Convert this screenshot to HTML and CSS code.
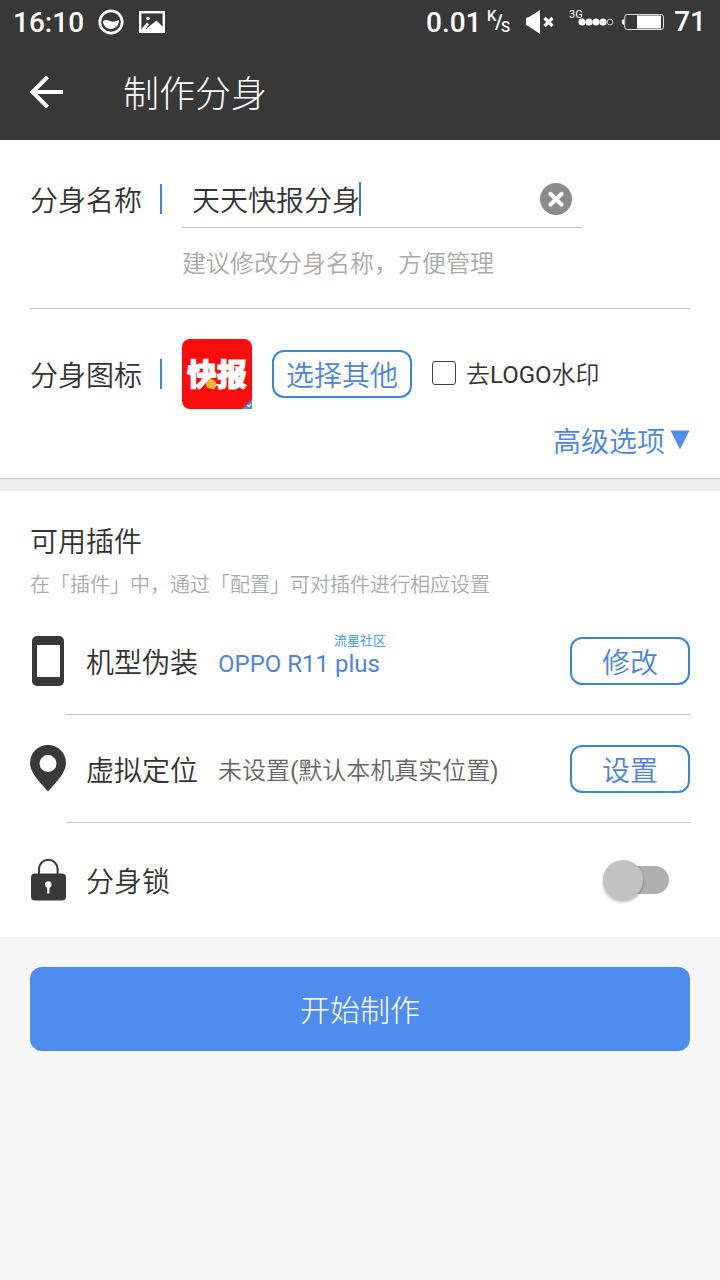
FILE: index.html
```html
<!DOCTYPE html>
<html lang="zh-CN">
<head>
<meta charset="utf-8">
<title>制作分身</title>
<link rel="stylesheet" href="styles.css">
</head>
<body>
<header class="header">
  <div class="status">
    <span class="clock">16:10</span>
    <svg class="ic-ring" width="26" height="26" viewBox="0 0 26 26"><circle cx="13" cy="13" r="11.200" fill="none" stroke="#fff" stroke-width="2.700"/><path d="M5 12c2.500-1.500 4.500-1.200 7 0s5 .8 9-1c0 5.500-3.500 9-8 9s-8-3.500-8-8z" fill="#fff"/></svg>
    <svg class="ic-photo" width="26" height="22" viewBox="0 0 26 22"><rect x="1.200" y="1.200" width="23.600" height="19.600" fill="none" stroke="#fff" stroke-width="2.400"/><circle cx="9" cy="7.500" r="1.800" fill="#fff"/><path d="M2 18.500l6-7 2 2-2 3.500 9.500-7.500 7 7V21H2z" fill="#fff"/><path d="M7 18l3.500-4.500" stroke="#383838" stroke-width="1"/></svg>
    <span class="speed">0.01</span>
    <span class="unit"><span class="unit-k">K</span><span class="unit-slash">/</span><span class="unit-s">S</span></span>
    <svg class="ic-mute" width="28" height="26" viewBox="0 0 28 26"><path d="M0 9l3-1L14 1v24L3 17.500 0 16z" fill="#fff"/><path d="M18.500 9l8 8m0-8l-8 8" stroke="#fff" stroke-width="3.200"/></svg>
    <span class="signal"><span class="net">3G</span><svg width="36" height="8" viewBox="0 0 36 8"><g fill="#fff"><circle cx="4" cy="4" r="3.600"/><circle cx="11" cy="4" r="3.600"/><circle cx="18" cy="4" r="3.600"/><circle cx="25" cy="4" r="3.600"/></g><circle cx="32" cy="4" r="2.900" fill="none" stroke="#ccc" stroke-width="1"/></svg></span>
    <svg class="ic-battery" width="44" height="18" viewBox="0 0 44 18"><path d="M3 6v6C0 11.500 0 6.500 3 6z" fill="#fff"/><rect x="3.700" y="1.500" width="38.800" height="15" rx="2.500" fill="none" stroke="#ddd"/><path d="M16 2.500h24v13H16z" fill="#fff"/></svg>
    <span class="level">71</span>
  </div>
  <div class="titlebar">
    <svg width="34" height="34" viewBox="0 0 34 34"><path d="M17.500 2L2.500 17l15 15M2.500 17H33" fill="none" stroke="#fff" stroke-width="4"/></svg>
    <h1 class="title">制作分身</h1>
  </div>
</header>

<section class="panel basics">
  <div class="row-name">
    <span class="label">分身名称</span><i class="bar"></i>
    <div class="field">
      <div class="input"><span class="value">天天快报分身</span><i class="caret"></i>
        <svg class="clear" width="32" height="32" viewBox="0 0 32 32"><circle cx="16" cy="16" r="16" fill="#8b8b8b"/><path d="M10.500 11l11 10.500m0-10.500l-11 10.500" stroke="#fff" stroke-width="4.200" stroke-linecap="round"/></svg>
      </div>
      <p class="hint">建议修改分身名称，方便管理</p>
    </div>
  </div>
  <div class="row-icon">
    <span class="label">分身图标</span><i class="bar"></i>
    <div class="app"><span class="app-name">快报</span><i class="app-dot"></i>
      <svg class="app-corner" width="10" height="10" viewBox="0 0 10 10"><path d="M10 0v10H0z" fill="#4f86cf"/><path d="M5 6l2 1.500L9 5" fill="none" stroke="#dce8fa" stroke-width="1.300"/></svg>
    </div>
    <button class="btn choose">选择其他</button>
    <i class="check"></i><span class="check-label">去<span class="latin">LOGO</span>水印</span>
  </div>
  <div class="advanced"><span>高级选项</span><svg width="20" height="20" viewBox="0 0 20 20"><path d="M.5.500h19L10 19.500z" fill="#4d8bec"/></svg></div>
</section>
<div class="gap"></div>

<section class="panel plugins">
  <h2 class="plugins-title">可用插件</h2>
  <p class="plugins-hint">在「插件」中，通过「配置」可对插件进行相应设置</p>
  <div class="item item-device">
    <svg class="item-icon" width="36" height="50" viewBox="0 0 36 50"><path fill-rule="evenodd" d="M7 0h22a5 5 0 0 1 5 5v40a5 5 0 0 1-5 5H7a5 5 0 0 1-5-5V5a5 5 0 0 1 5-5zM7 9v32h23V9z" fill="#383838"/></svg>
    <span class="item-name">机型伪装</span>
    <span class="item-value device"><span class="latin">OPPO R11 plus</span><span class="mark">流星社区</span></span>
    <button class="btn">修改</button>
  </div>
  <div class="item item-place">
    <svg class="item-icon" width="36" height="48" viewBox="0 0 36 48"><path fill-rule="evenodd" d="M18 0a18 18 0 0 1 18 18C36 28 26 37 18 46.500 10 37 0 28 0 18A18 18 0 0 1 18 0zm0 10a8.500 8.500 0 1 0 0 17 8.500 8.500 0 0 0 0-17z" fill="#383838"/></svg>
    <span class="item-name">虚拟定位</span>
    <span class="item-value">未设置<span class="latin">(</span>默认本机真实位置<span class="latin">)</span></span>
    <button class="btn">设置</button>
  </div>
  <div class="item item-lock">
    <svg class="item-icon" width="36" height="44" viewBox="0 0 36 44"><path d="M9 17v-6a9.300 9.300 0 0 1 18.600 0v6" fill="none" stroke="#383838" stroke-width="2"/><rect x="1" y="15.500" width="35" height="27" rx="4" fill="#383838"/><circle cx="18.300" cy="26.500" r="3.200" fill="#fff"/><path d="M17.200 27.500h2.200v8h-2.200z" fill="#fff"/></svg>
    <span class="item-name">分身锁</span>
    <span class="switch"><i class="knob"></i></span>
  </div>
</section>

<main class="footer"><button class="start">开始制作</button></main>
</body>
</html>
```
FILE: styles.css
```css
* { box-sizing: border-box; }
body { margin: 0; width: 720px; min-height: 1280px; background: #f6f6f6; color: #333; font-family: "Noto Sans CJK SC", sans-serif; font-weight: 350; font-size: 28px; line-height: 40px; white-space: nowrap; }
h1, h2, p { margin: 0; font-weight: 350; }
i { display: block; flex: none; }
svg { display: block; flex: none; }
button { font: inherit; margin: 0; padding: 0; }
.latin { font-family: Roboto, sans-serif; font-weight: 400; }

.header { height: 140px; background: #383838; color: #fff; }
.status { display: flex; align-items: center; height: 44px; padding: 0 14px 0 13px; font-family: Roboto, sans-serif; font-size: 28px; font-weight: 500; }
.clock { width: 71px; padding-top: 1px; }
.ic-ring { margin-left: 14px; }
.ic-photo { margin-left: 15px; }
.speed { margin-left: 261px; width: 54px; padding-top: 1px; }
.unit { position: relative; width: 26px; height: 30px; margin-left: 6px; font-size: 15px; line-height: 18px; }
.unit-k { position: absolute; left: 1px; top: 0; }
.unit-slash { position: absolute; left: 9px; top: 6px; font-size: 20px; }
.unit-s { position: absolute; left: 15px; top: 11px; }
.ic-mute { margin-left: 14px; }
.signal { position: relative; width: 45px; height: 26px; margin-left: 15px; padding: 9px 0 0 9px; }
.net { position: absolute; left: 0; top: 0; font-size: 11px; line-height: 12px; font-weight: 400; }
.ic-battery { margin-left: 7px; }
.level { margin-left: auto; }
.titlebar { display: flex; align-items: center; height: 96px; padding: 0 30px; }
.title { margin: 0 0 2px 59px; font-size: 36px; line-height: 48px; font-weight: 300; }

.panel { background: #fff; padding: 0 30px; }
.basics { height: 339px; border-bottom: 1px solid #c8c8c8; }
.row-name { display: flex; height: 169px; padding-top: 31px; border-bottom: 1px solid #c8c8c8; }
.row-name > .label { margin-top: 8px; }
.label { width: 130px; }
.bar { width: 2px; height: 30px; background: #4a84cf; }
.row-name > .bar { margin-top: 13px; }
.field { width: 400px; margin-left: 20px; }
.input { display: flex; align-items: center; height: 57px; padding: 0 10px; border-bottom: 1px solid #c8c8c8; }
.caret { width: 2px; height: 34px; margin-left: -1px; background: #3d7fb8; }
.clear { margin-left: auto; }
.hint { margin-top: 14px; font-size: 24px; color: #aaa; }
.row-icon { display: flex; align-items: center; height: 70px; margin-top: 30px; }
.app { position: relative; width: 70px; height: 70px; margin-left: 20px; border-radius: 8px 8px 0 8px; background: #fb0d0d; color: #fff; overflow: hidden; }
.app-name { position: absolute; left: 5px; top: 13px; font-weight: 900; font-size: 30px; -webkit-text-stroke: 1px #fff; }
.app-dot { position: absolute; left: 24px; top: 40px; width: 10px; height: 10px; border-radius: 50%; background: #ffb332; }
.app-corner { position: absolute; right: 0; bottom: 0; }
.btn { width: 120px; height: 48px; border: 2px solid #3a86d2; border-radius: 12px; background: #fff; color: #4d84d8; }
.choose { width: 140px; margin-left: 20px; }
.check { width: 24px; height: 24px; margin: 0 0 2px 20px; border: 1.500px solid #444; border-radius: 3px; }
.check-label { margin-left: 10px; padding-top: 2px; font-family: Roboto, "Noto Sans CJK SC", sans-serif; font-size: 24px; }
.advanced { display: flex; align-items: center; justify-content: flex-end; gap: 5px; margin-top: 11px; color: #4a85df; }
.gap { height: 12px; background: #eee; }

.plugins { height: 446px; padding-top: 29px; }
.plugins-title { font-size: 28px; }
.plugins-hint { margin-top: 9px; font-size: 20px; line-height: 30px; color: #aaa; }
.item { position: relative; display: flex; align-items: center; height: 108px; }
.item-device { margin-top: 8px; }
.item-device::after, .item-place::after { content: ""; position: absolute; left: 36px; right: 0; bottom: 0; height: 1px; background: #c8c8c8; }
.item-name { width: 132px; margin-left: 20px; }
.item-value { padding-top: 2px; font-size: 24px; color: #666; }
.device { position: relative; padding-top: 3px; color: #5084dc; }
.mark { position: absolute; left: 116px; top: -8px; font-size: 13px; line-height: 18px; color: #2a96e8; }
.item .btn { margin-left: auto; }
.item-lock { height: 114px; }
.switch { position: relative; width: 66px; height: 28px; margin: 0 21px 0 auto; border-radius: 14px; background: linear-gradient(90deg, transparent 20px, #b0b0b0 20px); }
.knob { position: absolute; left: 0; top: -6px; width: 40px; height: 40px; border-radius: 50%; background: #c2c2c2; box-shadow: 0 2px 3px rgba(0,0,0,.28); }

.footer { padding: 30px; }
.start { display: block; width: 660px; height: 84px; padding-bottom: 2px; border: 0; border-radius: 12px; background: #4e8cee; color: #fff; font-size: 30px; font-weight: 300; }
```
